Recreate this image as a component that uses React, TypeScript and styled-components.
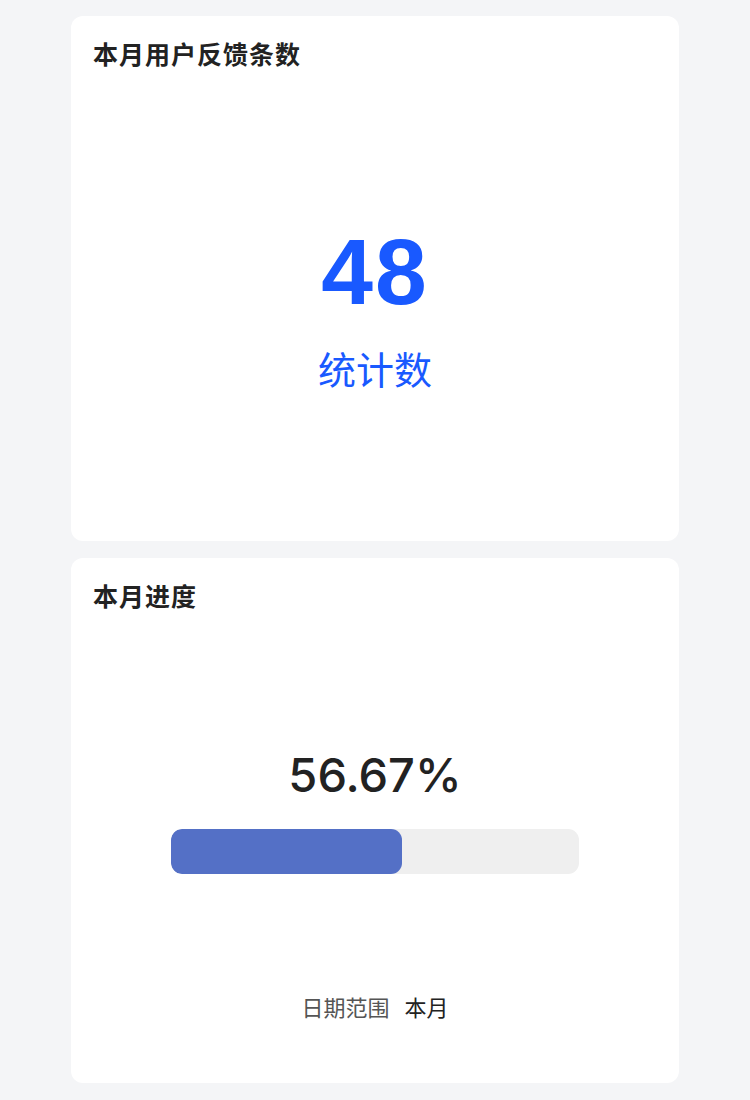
import React from 'react';
import styled, { createGlobalStyle } from 'styled-components';

const GlobalStyle = createGlobalStyle`
  html, body {
    margin: 0;
    padding: 0;
    background: #f4f5f7;
  }
  body {
    font-family: 'Liberation Sans', 'Noto Sans CJK SC', sans-serif;
    color: #222;
  }
`;

const progress = 56.67;

export default function App() {
  return (
    <>
      <GlobalStyle />
      <Page>
        <Card>
          <Title>本月用户反馈条数</Title>
          <StatBody>
            <BigNumber>48</BigNumber>
            <StatLabel>统计数</StatLabel>
          </StatBody>
        </Card>
        <Card>
          <Title>本月进度</Title>
          <ProgressBody>
            <Percent>{progress.toFixed(2)}%</Percent>
            <Track>
              <Fill style={{ width: `${progress}%` }} />
            </Track>
            <Footer>
              <FooterLabel>日期范围</FooterLabel>
              <FooterValue>本月</FooterValue>
            </Footer>
          </ProgressBody>
        </Card>
      </Page>
    </>
  );
}

const Page = styled.div`
  width: 608px;
  margin: 0 auto;
  padding: 16px 0;
  display: flex;
  flex-direction: column;
  gap: 17px;
`;

const Card = styled.section`
  height: 525px;
  box-sizing: border-box;
  background: #fff;
  border-radius: 12px;
  padding: 19px 22px 20px;
  display: flex;
  flex-direction: column;
`;

const Title = styled.h2`
  margin: 0;
  font-family: 'Noto Sans CJK SC', sans-serif;
  font-size: 25px;
  line-height: 36px;
  font-weight: 700;
  letter-spacing: 1px;
  color: #222;
`;

const StatBody = styled.div`
  flex: 1;
  display: flex;
  flex-direction: column;
  align-items: center;
  justify-content: center;
  padding-top: 25px;
`;

const BigNumber = styled.div`
  font-family: 'Liberation Sans', sans-serif;
  font-size: 93px;
  line-height: 1;
  font-weight: 700;
  letter-spacing: 2px;
  color: #1959ff;
`;

const StatLabel = styled.div`
  margin-top: 26px;
  font-family: 'Noto Sans CJK SC', sans-serif;
  font-size: 38px;
  line-height: 1.2;
  color: #1959ff;
`;

const ProgressBody = styled.div`
  flex: 1;
  display: flex;
  flex-direction: column;
  align-items: center;
`;

const Percent = styled.div`
  margin-top: 138px;
  font-family: Inter, Roboto, sans-serif;
  font-size: 47px;
  line-height: 1;
  font-weight: 500;
  color: #222;
`;

const Track = styled.div`
  margin-top: 31px;
  width: 408px;
  height: 45px;
  border-radius: 11px;
  background: #efefef;
  overflow: hidden;
`;

const Fill = styled.div`
  height: 100%;
  border-radius: 11px;
  background: #5470c6;
`;

const Footer = styled.div`
  margin-top: 117px;
  display: flex;
  gap: 15px;
  font-family: 'Noto Sans CJK SC', sans-serif;
  font-size: 22px;
  line-height: 30px;
`;

const FooterLabel = styled.span`
  color: #555;
`;

const FooterValue = styled.span`
  color: #222;
`;
